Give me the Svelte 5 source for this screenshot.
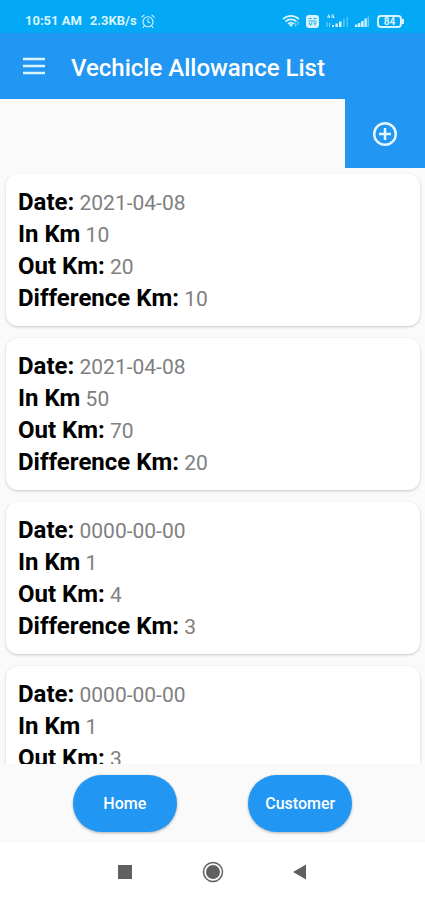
<script lang="ts">
  type Entry = { date: string; inKm: number; outKm: number; diff?: number };

  const entries: Entry[] = [
    { date: "2021-04-08", inKm: 10, outKm: 20, diff: 10 },
    { date: "2021-04-08", inKm: 50, outKm: 70, diff: 20 },
    { date: "0000-00-00", inKm: 1, outKm: 4, diff: 3 },
    { date: "0000-00-00", inKm: 1, outKm: 3 },
  ];
</script>

<div class="screen">
  <div class="status">
    <span>10:51 AM</span>
    <span class="rate">2.3KB/s</span>
    <svg class="alarm" width="14" height="14" viewBox="0 0 14 14" aria-hidden="true">
      <g fill="none" stroke="currentColor" stroke-width="1.1" stroke-linecap="round">
        <circle cx="7" cy="7.8" r="5" />
        <path d="M7 5v3l2 .8M.8 3.2 3 1.2M13.2 3.2 11 1.2M3.2 12l-1 1.3M10.8 12l1 1.3" />
      </g>
    </svg>
    <div class="signals">
      <svg width="19" height="14" viewBox="0 0 19 14" aria-hidden="true">
        <g fill="none" stroke="currentColor" stroke-width="1.7">
          <path d="M1 5.2C5.5.8 12.5.8 17 5.2" />
          <path d="M3.5 7.6c3.2-3 7.8-3 11 0" />
          <path d="M6 10c1.8-1.7 4.2-1.7 6 0" />
          <path d="M13.5 12.5V9M16 11V7.5" stroke-width="1.5" opacity=".5" />
        </g>
        <path d="m9 13-2-2.2c1.2-1 2.8-1 4 0z" fill="currentColor" />
      </svg>
      <svg class="volte" width="13" height="13" viewBox="0 0 13 13" aria-hidden="true">
        <rect width="13" height="13" rx="3" fill="currentColor" />
        <path d="M2.5 3.5h3M7.5 3.5h3M2.5 6h8M3 7.5l1.5 3L6 7.5M7.5 8h3M9 8v2.5" fill="none" stroke="#03a9f4" stroke-width=".9" />
      </svg>
      <svg class="cell" width="23" height="14" viewBox="0 0 23 14" aria-hidden="true">
        <path d="M3 .5 1.5 3H4M3.5 1.5V4M8 1H6v2.5h2v-1H7" fill="none" stroke="currentColor" stroke-width=".9" />
        <path d="M1 8v5M3.5 9v4" stroke="currentColor" stroke-width="1" opacity=".6" />
        <path d="M6 11h2v2H6zM9.5 9.5h2.2V13H9.5zM13 7.5h2.5V13H13z" fill="currentColor" />
        <path d="M17 5h1.8v8H17zM20.5 3H22v10h-1.5z" fill="currentColor" opacity=".35" />
      </svg>
      <svg class="cell2" width="16" height="12" viewBox="0 0 16 12" aria-hidden="true">
        <path d="M1 9.5h2.5V12H1zM4 8h2.5v4H4zM7.2 6h2.5v6H7.2zM10.5 3.5h2.2V12h-2.2z" fill="currentColor" />
        <path d="M13.5 1.5H15V12h-1.5z" fill="currentColor" opacity=".5" />
      </svg>
      <span class="battery">84</span>
    </div>
  </div>

  <header>
    <button class="menu" aria-label="Open menu">
      <svg width="24" height="18" viewBox="0 0 24 18" aria-hidden="true">
        <path d="M1 2h22M1 9h22M1 16h22" stroke="currentColor" stroke-width="2.4" />
      </svg>
    </button>
    <h1>Vechicle Allowance List</h1>
  </header>

  <div class="actions">
    <button class="add" aria-label="Add allowance">
      <svg width="26" height="26" viewBox="0 0 26 26" aria-hidden="true">
        <g fill="none" stroke="currentColor" stroke-width="2.5">
          <circle cx="13" cy="13" r="10.8" />
          <path d="M13 7v12M7 13h12" />
        </g>
      </svg>
    </button>
  </div>

  <main>
    {#each entries as entry}
      <article>
        <p><b>Date:</b> {entry.date}</p>
        <p><b>In Km</b> {entry.inKm}</p>
        <p><b>Out Km:</b> {entry.outKm}</p>
        {#if entry.diff !== undefined}
          <p><b>Difference Km:</b> {entry.diff}</p>
        {/if}
      </article>
    {/each}
  </main>

  <footer>
    <button class="pill">Home</button>
    <button class="pill">Customer</button>
  </footer>

  <nav>
    <button aria-label="Recent apps">
      <svg width="24" height="24" viewBox="0 0 24 24" aria-hidden="true">
        <rect x="5" y="5" width="14" height="14" fill="currentColor" />
      </svg>
    </button>
    <button aria-label="Home screen">
      <svg width="24" height="24" viewBox="0 0 24 24" aria-hidden="true">
        <circle cx="12" cy="12" r="9.5" fill="none" stroke="currentColor" stroke-width="1.5" />
        <circle cx="12" cy="12" r="7" fill="currentColor" />
      </svg>
    </button>
    <button aria-label="Back">
      <svg width="24" height="24" viewBox="0 0 24 24" aria-hidden="true">
        <path d="M17 4.5v15L4 12z" fill="currentColor" />
      </svg>
    </button>
  </nav>
</div>

<style>
  :global(body) { margin: 0; }

  .screen {
    display: flex;
    flex-direction: column;
    height: 100vh;
    background: #fafafa;
    font-family: Roboto, "Liberation Sans", sans-serif;
  }
  button {
    padding: 0;
    border: 0;
    background: none;
    color: inherit;
    font: inherit;
    cursor: pointer;
  }
  svg { display: block; }

  .status {
    display: flex;
    align-items: center;
    box-sizing: border-box;
    height: 33px;
    padding: 9px 23px 0 25px;
    background: #03a9f4;
    color: #d9f4ff;
    font-size: 13px;
    font-weight: 700;
    line-height: 24px;
  }
  .rate { margin-left: 8px; }
  .alarm { margin-left: 4px; }
  .signals {
    display: flex;
    align-items: center;
    margin-left: auto;
  }
  .volte { margin-left: 5px; }
  .cell { margin-left: 7px; }
  .cell2 { margin-left: 5px; }
  .battery {
    position: relative;
    width: 21px;
    margin-left: 7px;
    border: 2px solid currentColor;
    border-radius: 4px;
    font-size: 10px;
    line-height: 9px;
    text-align: center;
  }
  .battery::after {
    content: "";
    position: absolute;
    top: 2px;
    right: -4px;
    width: 2px;
    height: 5px;
    background: currentColor;
  }

  header {
    display: flex;
    align-items: center;
    height: 66px;
    padding-left: 22px;
    background: #2196f3;
    color: #fff;
  }
  .menu { color: #d9f4ff; }
  h1 {
    margin: 4px 0 0 25px;
    font-size: 24px;
    font-weight: 500;
    line-height: 32px;
  }

  .actions {
    display: flex;
    justify-content: flex-end;
  }
  .add {
    display: grid;
    place-items: center;
    width: 80px;
    height: 69px;
    background: #2196f3;
    color: #e6f6ff;
  }

  main {
    display: flex;
    flex: 1;
    flex-direction: column;
    gap: 12px;
    min-height: 0;
    padding: 6px 5px 0 6px;
    overflow-y: auto;
    scrollbar-width: none;
  }
  article {
    flex: none;
    padding: 13px 12px 11px;
    border-radius: 12px;
    background: #fff;
    box-shadow: 0 1px 3px rgba(0, 0, 0, .2);
  }
  p {
    margin: 0;
    color: #808080;
    font-size: 21px;
    line-height: 32px;
  }
  b {
    color: #000;
    font-size: 24px;
    font-weight: 700;
    line-height: 24px;
  }

  footer {
    display: flex;
    justify-content: space-around;
    padding: 11px 37px;
    background: #fafafa;
  }
  .pill {
    width: 104px;
    height: 57px;
    border-radius: 29px;
    background: #2196f3;
    box-shadow: 0 1px 3px rgba(0, 0, 0, .3);
    color: #fff;
    font-size: 16px;
    font-weight: 500;
  }

  nav {
    display: flex;
    justify-content: center;
    gap: 64px;
    padding: 17px 0 16px;
    background: #fff;
    color: #606060;
  }
</style>
